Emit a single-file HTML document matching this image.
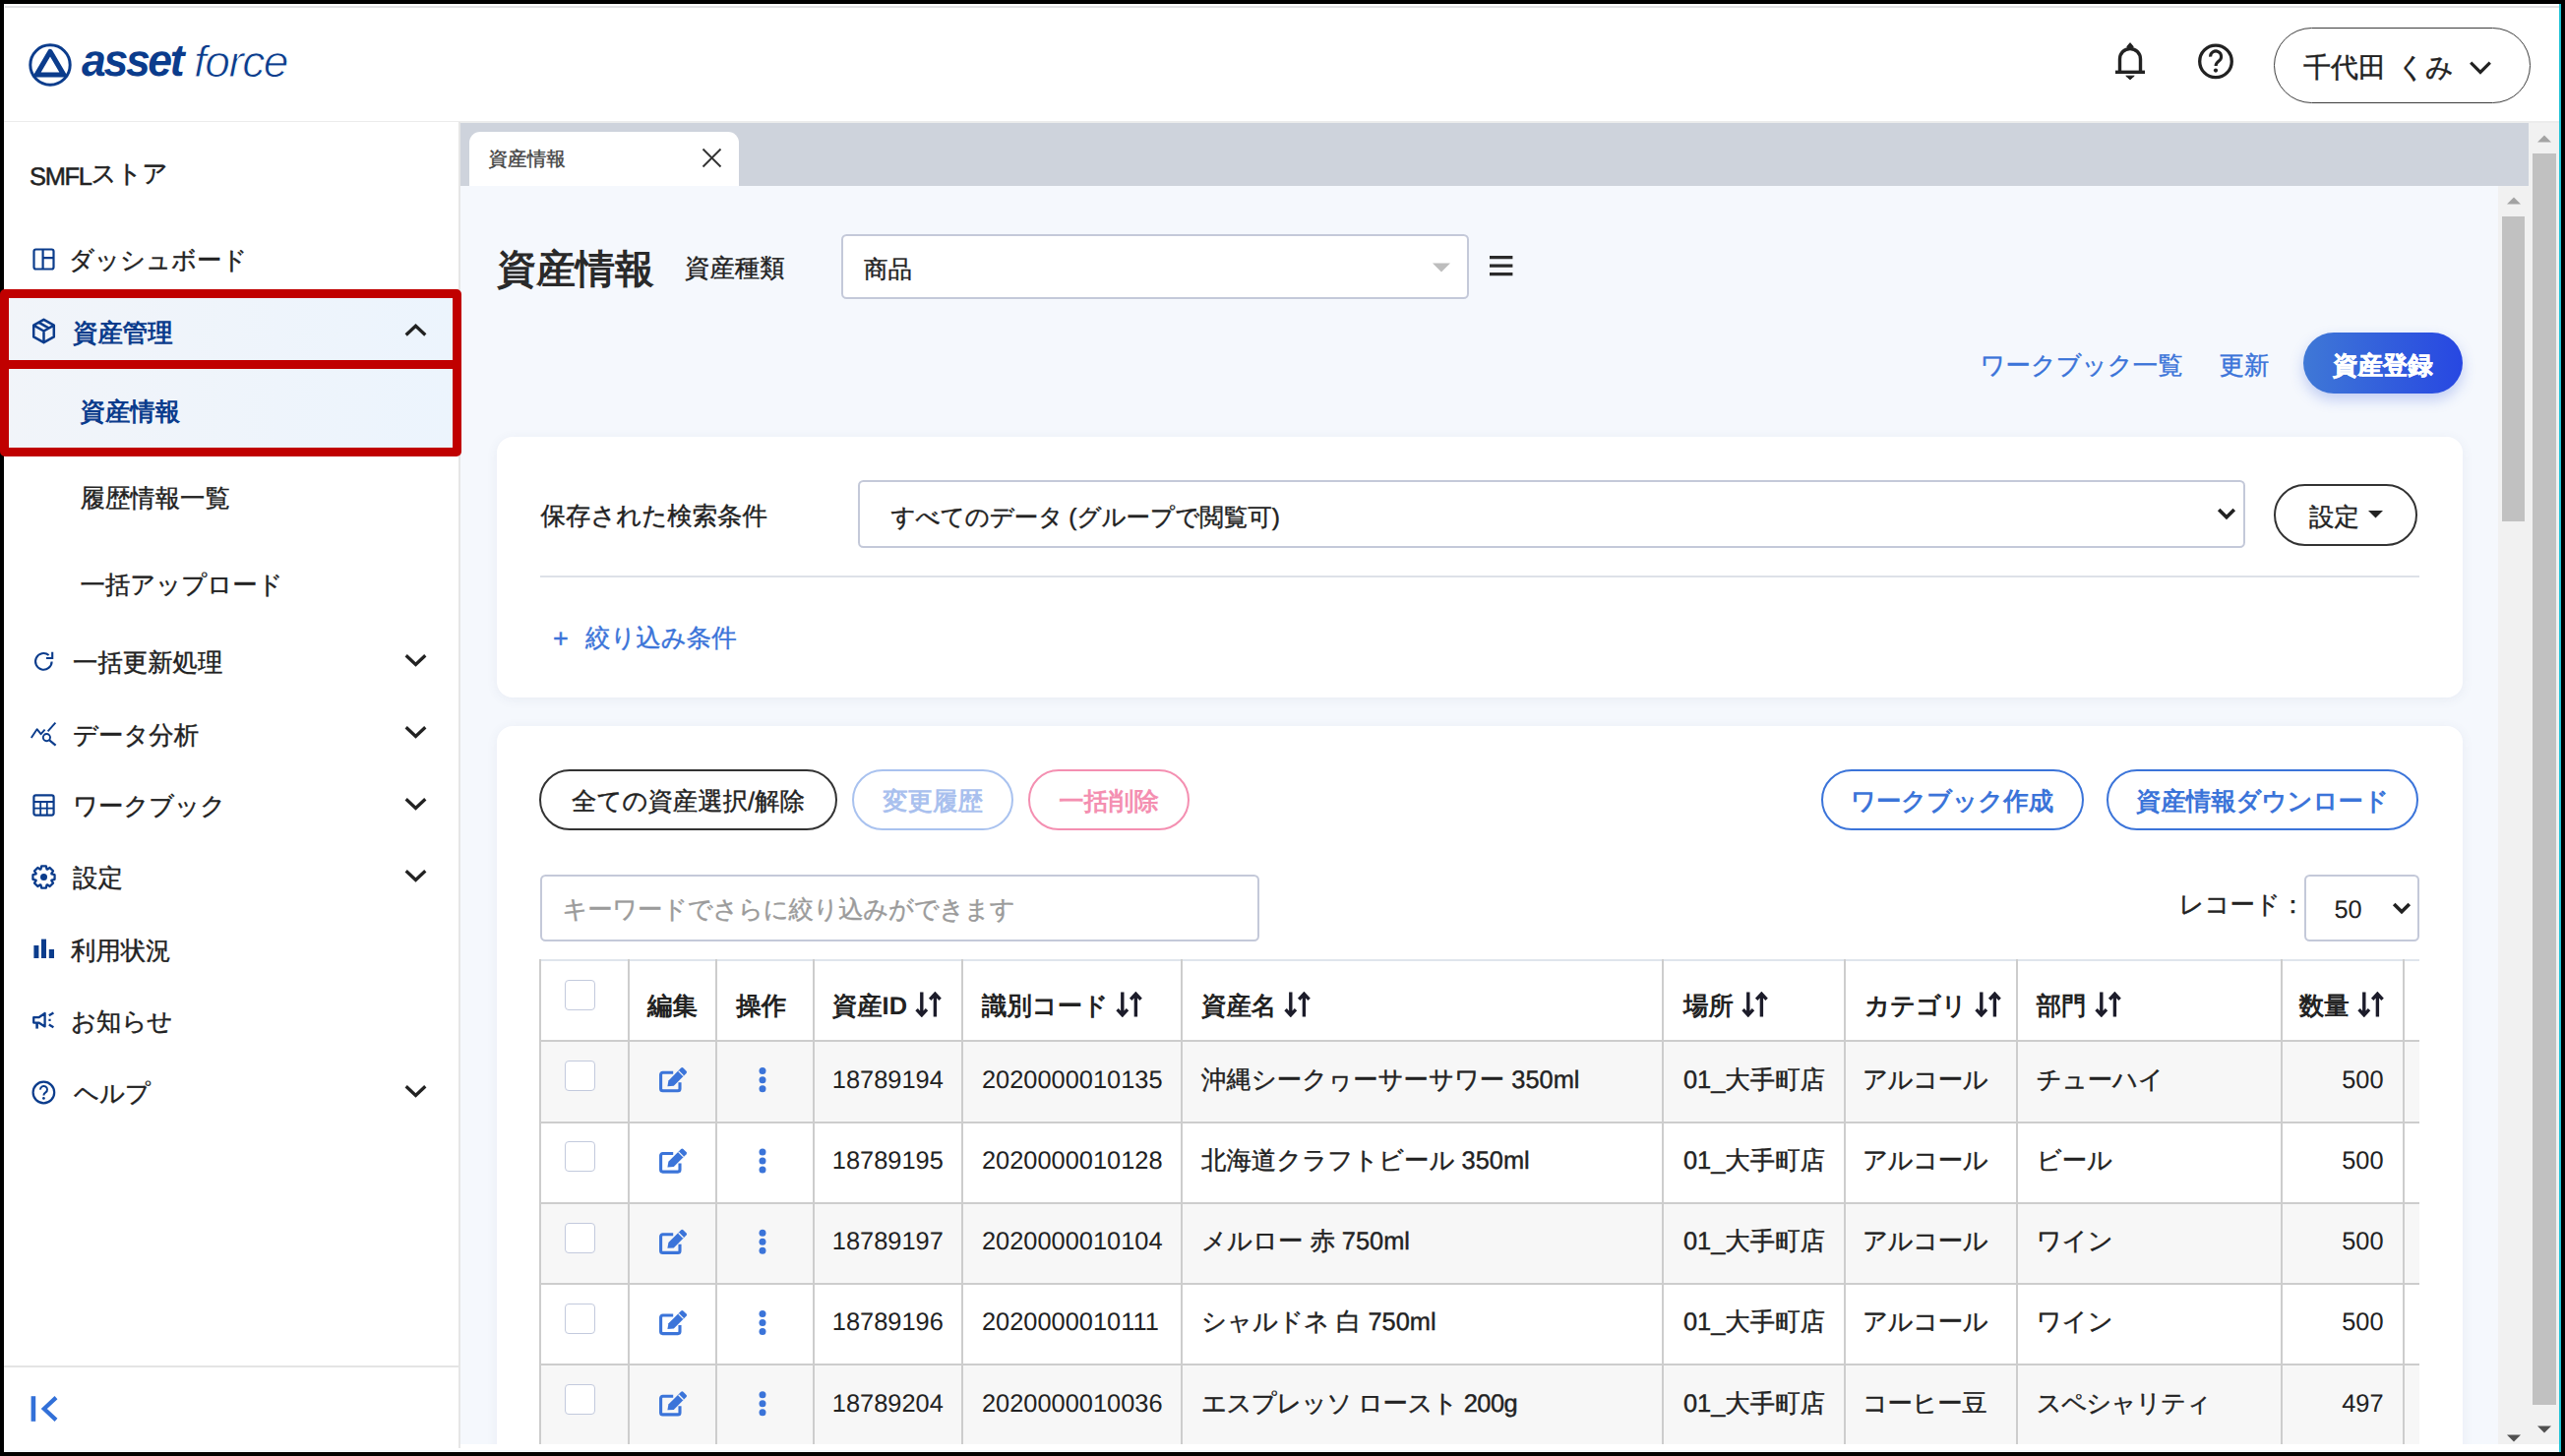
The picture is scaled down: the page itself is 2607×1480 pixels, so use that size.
<!DOCTYPE html>
<html lang="ja"><head><meta charset="utf-8"><title>資産情報 - assetforce</title>
<style>
*{box-sizing:border-box;margin:0;padding:0}
html,body{width:2607px;height:1480px;overflow:hidden;background:#000}
body{font-family:"Liberation Sans",sans-serif;color:#222;font-size:25.4px;position:relative;text-rendering:geometricPrecision}
div,span,svg,a,h1,label{position:absolute;display:block}
.t{white-space:nowrap;height:40px;line-height:40px;-webkit-text-stroke:.4px}
.b{font-weight:bold;-webkit-text-stroke:0}
.k{-webkit-text-stroke:.4px}
.nav{color:#0b3c8c}
.blue{color:#3b74d9}
.pill{border-radius:40px;border:2px solid #333;background:#fff;text-align:center;white-space:nowrap}
.box{border:2px solid #c4c9d9;border-radius:5.5px;background:#fff}
.card{background:#fff;border-radius:16px;box-shadow:0 2px 12px rgba(70,85,120,.075)}
.cb{width:31px;height:31px;border:1.7px solid #c3cadd;border-radius:4px;background:#fff;left:574px}
.th{font-weight:bold;white-space:nowrap;height:40px;line-height:40px;top:1003px}
.td{white-space:nowrap;height:40px;line-height:40px}
.in{position:static;display:inline-block;vertical-align:-3px;margin-left:1px}
</style></head>
<body>
<div id="win" style="left:4px;top:4px;width:2597px;height:1472px;background:#fff"></div>
<div style="left:2601px;top:4px;width:2px;height:1472px;background:#22c3d6"></div>
<div style="left:5px;top:6px;width:2596px;height:2px;background:#e0e1e3"></div>
<header style="position:absolute;left:4px;top:8px;width:2597px;height:115px;background:#fff"></header>
<div style="left:4px;top:122.5px;width:2597px;height:2px;background:#ececec"></div>
<svg style="left:27px;top:42px" width="48" height="48" viewBox="0 0 48 48">
<circle cx="24" cy="24" r="20.2" fill="none" stroke="#0b3c8c" stroke-width="3"/>
<path d="M24 10.5 L37.8 34 L10.2 34 Z" fill="none" stroke="#0b3c8c" stroke-width="5.2" stroke-linejoin="round"/>
</svg>
<div class="t" id="lg1" style="left:82.5px;top:33px;height:56px;line-height:56px;font-size:46px;font-weight:bold;font-style:italic;color:#0b3c8c;letter-spacing:-2.4px;-webkit-text-stroke:0;transform-origin:0 50%;transform:scaleX(.968)">asset</div>
<div class="t" id="lg2" style="left:196.5px;top:35px;height:56px;line-height:56px;font-size:45px;font-style:italic;color:#0b3c8c;letter-spacing:-1.5px;-webkit-text-stroke:.9px #fff;transform-origin:0 50%;transform:scaleX(1.026)">force</div>
<svg style="left:2146px;top:42px" width="38" height="42" viewBox="0 0 38 42">
<path d="M8.5 30.5 V18 a10.5 10.5 0 0 1 21 0 V30.5" fill="none" stroke="#222" stroke-width="3.4"/>
<path d="M4 31.3 H34" stroke="#222" stroke-width="3.4"/>
<path d="M16.2 5.6 L19 2.2 L21.8 5.6 Z" fill="#222" stroke="#222" stroke-width="1.6" stroke-linejoin="round"/>
<path d="M14.8 35.2 H23.2 L19 38.8 Z" fill="#222" stroke="#222" stroke-width="1" stroke-linejoin="round"/>
</svg>
<svg style="left:2232px;top:42px" width="40" height="40" viewBox="0 0 40 40">
<circle cx="20" cy="20.4" r="16.3" fill="none" stroke="#222" stroke-width="3.3"/>
<path d="M14.6 15.6 a5.5 5.5 0 1 1 8.6 4.4 c-2 1.5 -3.1 2.4 -3.1 5" fill="none" stroke="#222" stroke-width="3.1"/>
<circle cx="20" cy="29.6" r="2.1" fill="#222"/>
</svg>
<div class="pill" style="left:2311px;top:27.5px;width:261px;height:77px;border-color:#3d3d3d;border-width:1.8px"></div>
<div class="t" id="user" style="left:2341px;top:49px;font-size:28px;word-spacing:3.5px">千代田 くみ</div>
<svg style="left:2509px;top:61px" width="24" height="16" viewBox="0 0 24 16"><path d="M2.2 2.6 L12 12.4 L21.8 2.6" fill="none" stroke="#222" stroke-width="3.2"/></svg>
<main style="position:absolute;left:468px;top:188.5px;width:2072px;height:1279.5px;background:#f5f8fd;overflow:hidden"></main>
<div style="left:468px;top:124.5px;width:2102px;height:64px;background:#ced3dc"></div>
<div style="left:477px;top:133.5px;width:274px;height:55px;background:#fff;border-radius:11px 11px 0 0"></div>
<div class="t " style="left:496.5px;top:141.7px;font-size:19.6px;color:#444">資産情報</div>
<svg style="left:713px;top:150px" width="21" height="21" viewBox="0 0 21 21"><path d="M1.5 1.5 L19.5 19.5 M19.5 1.5 L1.5 19.5" stroke="#333" stroke-width="1.9" fill="none"/></svg>
<h1 class="t b" style="left:505px;top:254.7px;font-size:40px;height:56px;line-height:56px;top:246px;color:#2a2a2a">資産情報</h1>
<div class="t " style="left:696px;top:253.2px;">資産種類</div>
<div class="box" style="left:855px;top:237.5px;width:638px;height:66px"></div>
<div class="t " style="left:878px;top:255.3px;font-size:24.5px">商品</div>
<svg style="left:1455.5px;top:266.5px" width="18" height="10" viewBox="0 0 18 10"><path d="M0 0.4 H18 L9 9.6 Z" fill="#bdbdbd"/></svg>
<svg style="left:1514px;top:259px" width="24" height="22" viewBox="0 0 24 22"><path d="M0 2.6 H23.4 M0 11.2 H23.4 M0 19.6 H23.4" stroke="#2a2a2a" stroke-width="3.2"/></svg>
<a class="t blue" style="left:2012.5px;top:351.7px;">ワークブック一覧</a>
<a class="t blue" style="left:2255.5px;top:351.7px;">更新</a>
<div style="left:2341px;top:337.5px;width:162px;height:62.5px;border-radius:32px;background:linear-gradient(90deg,#3f78d6,#2747e2);box-shadow:0 6px 14px rgba(50,90,220,.28)"></div>
<div class="t b" style="left:2371px;top:351.7px;color:#fff;-webkit-text-stroke:.6px #fff">資産登録</div>
<section class="card" style="position:absolute;left:505px;top:444px;width:1998px;height:265px"></section>
<label class="t " style="left:549.5px;top:505.2px;">保存された検索条件</label>
<div class="box" style="left:871.5px;top:488px;width:1410px;height:69px"></div>
<div class="t " style="left:905.5px;top:506.7px;font-size:24.5px;word-spacing:-1px">すべてのデータ (グループで閲覧可)</div>
<svg style="left:2253px;top:515px" width="20" height="15" viewBox="0 0 20 15"><path d="M2.2 3 L10 10.8 L17.8 3" fill="none" stroke="#222" stroke-width="3.6"/></svg>
<div class="pill" style="left:2310.5px;top:491.5px;width:146.5px;height:63.5px"></div>
<div class="t " style="left:2347px;top:506.2px;">設定</div>
<svg style="left:2407px;top:519px" width="15" height="8" viewBox="0 0 15 8"><path d="M0 0 H15 L7.5 7.6 Z" fill="#222"/></svg>
<div style="left:548.5px;top:584.5px;width:1910px;height:2px;background:#dde1e8"></div>
<div class="t blue" style="left:562px;top:628.7px;font-size:27px">+</div>
<a class="t blue" style="left:595px;top:628.7px;">絞り込み条件</a>
<section class="card" style="position:absolute;left:505px;top:738px;width:1998px;height:760px"></section>
<div class="pill" style="left:548px;top:782px;width:303px;height:62px;border:2px solid #333"></div><div class="t" style="left:548px;width:303px;text-align:center;top:795.2px;color:#222;">全ての資産選択/解除</div>
<div class="pill" style="left:866px;top:782px;width:164px;height:62px;border:2px solid #a9c2ef"></div><div class="t" style="left:866px;width:164px;text-align:center;top:795.2px;color:#a9c0ee;font-weight:bold;-webkit-text-stroke:0;">変更履歴</div>
<div class="pill" style="left:1045px;top:782px;width:164px;height:62px;border:2px solid #f48fb1"></div><div class="t" style="left:1045px;width:164px;text-align:center;top:795.2px;color:#f48fb1;font-weight:bold;-webkit-text-stroke:0;">一括削除</div>
<div class="pill" style="left:1850.5px;top:782px;width:267px;height:62px;border:2px solid #3b74d9"></div><div class="t" style="left:1850.5px;width:267px;text-align:center;top:795.2px;color:#3b74d9;font-weight:bold;-webkit-text-stroke:0;">ワークブック作成</div>
<div class="pill" style="left:2141px;top:782px;width:317px;height:62px;border:2px solid #3b74d9"></div><div class="t" style="left:2141px;width:317px;text-align:center;top:795.2px;color:#3b74d9;font-weight:bold;-webkit-text-stroke:0;">資産情報ダウンロード</div>
<div class="box" style="left:548.5px;top:888.5px;width:731px;height:68.5px"></div>
<div class="t " style="left:571.5px;top:904.7px;color:#9b9b9b;letter-spacing:-.3px">キーワードでさらに絞り込みができます</div>
<div class="t " style="left:2214.5px;top:900.2px;">レコード：</div>
<div class="box" style="left:2342px;top:888.5px;width:117px;height:68px"></div>
<div class="t " style="left:2372.5px;top:905.2px;-webkit-text-stroke:0">50</div>
<svg style="left:2430.5px;top:915.5px" width="20" height="15" viewBox="0 0 20 15"><path d="M2.2 3 L10 10.8 L17.8 3" fill="none" stroke="#222" stroke-width="3.6"/></svg>
<div id="tbl" style="left:548px;top:975px;width:1911px;height:493px;overflow:hidden">
<div style="left:0;top:83.3px;width:1911px;height:83px;background:#f7f7f7"></div>
<div style="left:0;top:165.6px;width:1911px;height:83px;background:#fff"></div>
<div style="left:0;top:247.9px;width:1911px;height:83px;background:#f7f7f7"></div>
<div style="left:0;top:330.1px;width:1911px;height:83px;background:#fff"></div>
<div style="left:0;top:412.4px;width:1911px;height:83px;background:#f7f7f7"></div>
<div style="left:0;top:0px;width:1911px;height:2px;background:#dfe5ec"></div>
<div style="left:0;top:82.3px;width:1911px;height:2px;background:#cdcdcd"></div>
<div style="left:0;top:164.6px;width:1911px;height:2px;background:#cdcdcd"></div>
<div style="left:0;top:246.9px;width:1911px;height:2px;background:#cdcdcd"></div>
<div style="left:0;top:329.1px;width:1911px;height:2px;background:#cdcdcd"></div>
<div style="left:0;top:411.4px;width:1911px;height:2px;background:#cdcdcd"></div>
<div style="left:0.0px;top:0;width:2px;height:493px;background:#cdcdcd"></div>
<div style="left:89.5px;top:0;width:2px;height:493px;background:#cdcdcd"></div>
<div style="left:179.0px;top:0;width:2px;height:493px;background:#cdcdcd"></div>
<div style="left:277.7px;top:0;width:2px;height:493px;background:#cdcdcd"></div>
<div style="left:429.4px;top:0;width:2px;height:493px;background:#cdcdcd"></div>
<div style="left:652.0px;top:0;width:2px;height:493px;background:#cdcdcd"></div>
<div style="left:1141.4px;top:0;width:2px;height:493px;background:#cdcdcd"></div>
<div style="left:1326.0px;top:0;width:2px;height:493px;background:#cdcdcd"></div>
<div style="left:1501.0px;top:0;width:2px;height:493px;background:#cdcdcd"></div>
<div style="left:1770.0px;top:0;width:2px;height:493px;background:#cdcdcd"></div>
<div style="left:1894.0px;top:0;width:2px;height:493px;background:#cdcdcd"></div>
</div>
<div class="cb" style="top:996px"></div>
<div class="th" style="left:658px">編集</div>
<div class="th" style="left:748.3px">操作</div>
<div class="th" style="left:845.8px">資産ID <svg class="in" width="27" height="26" viewBox="0 0 27 26"><path d="M6.8 0.6 V23.4 M1.6 18.2 L6.8 23.8 L12 18.2" stroke="#1c1c2a" stroke-width="3.4" fill="none"/><path d="M20.4 25.4 V2.6 M15.2 7.8 L20.4 2.2 L25.6 7.8" stroke="#1c1c2a" stroke-width="3.4" fill="none"/></svg></div>
<div class="th" style="left:998px">識別コード <svg class="in" width="27" height="26" viewBox="0 0 27 26"><path d="M6.8 0.6 V23.4 M1.6 18.2 L6.8 23.8 L12 18.2" stroke="#1c1c2a" stroke-width="3.4" fill="none"/><path d="M20.4 25.4 V2.6 M15.2 7.8 L20.4 2.2 L25.6 7.8" stroke="#1c1c2a" stroke-width="3.4" fill="none"/></svg></div>
<div class="th" style="left:1221px">資産名 <svg class="in" width="27" height="26" viewBox="0 0 27 26"><path d="M6.8 0.6 V23.4 M1.6 18.2 L6.8 23.8 L12 18.2" stroke="#1c1c2a" stroke-width="3.4" fill="none"/><path d="M20.4 25.4 V2.6 M15.2 7.8 L20.4 2.2 L25.6 7.8" stroke="#1c1c2a" stroke-width="3.4" fill="none"/></svg></div>
<div class="th" style="left:1711px">場所 <svg class="in" width="27" height="26" viewBox="0 0 27 26"><path d="M6.8 0.6 V23.4 M1.6 18.2 L6.8 23.8 L12 18.2" stroke="#1c1c2a" stroke-width="3.4" fill="none"/><path d="M20.4 25.4 V2.6 M15.2 7.8 L20.4 2.2 L25.6 7.8" stroke="#1c1c2a" stroke-width="3.4" fill="none"/></svg></div>
<div class="th" style="left:1895px">カテゴリ <svg class="in" width="27" height="26" viewBox="0 0 27 26"><path d="M6.8 0.6 V23.4 M1.6 18.2 L6.8 23.8 L12 18.2" stroke="#1c1c2a" stroke-width="3.4" fill="none"/><path d="M20.4 25.4 V2.6 M15.2 7.8 L20.4 2.2 L25.6 7.8" stroke="#1c1c2a" stroke-width="3.4" fill="none"/></svg></div>
<div class="th" style="left:2069.7px">部門 <svg class="in" width="27" height="26" viewBox="0 0 27 26"><path d="M6.8 0.6 V23.4 M1.6 18.2 L6.8 23.8 L12 18.2" stroke="#1c1c2a" stroke-width="3.4" fill="none"/><path d="M20.4 25.4 V2.6 M15.2 7.8 L20.4 2.2 L25.6 7.8" stroke="#1c1c2a" stroke-width="3.4" fill="none"/></svg></div>
<div class="th" style="left:2200px;width:222.6px;text-align:right">数量 <svg class="in" width="27" height="26" viewBox="0 0 27 26"><path d="M6.8 0.6 V23.4 M1.6 18.2 L6.8 23.8 L12 18.2" stroke="#1c1c2a" stroke-width="3.4" fill="none"/><path d="M20.4 25.4 V2.6 M15.2 7.8 L20.4 2.2 L25.6 7.8" stroke="#1c1c2a" stroke-width="3.4" fill="none"/></svg></div>
<div class="cb" style="top:1078.0px"></div>
<svg style="left:669px;top:1084px" width="31" height="28" viewBox="0 -0.00 31 28"><path d="M22 16.2 V22.8 a2 2 0 0 1 -2 2 H4.6 a2 2 0 0 1 -2 -2 V8.2 a2 2 0 0 1 2 -2 H15.2" fill="none" stroke="#3b74d9" stroke-width="3.1"/><path d="M9.4 20.2 L10.4 14.4 L23.2 1.6 a1.6 1.6 0 0 1 2.2 0 L28.6 4.8 a1.6 1.6 0 0 1 0 2.2 L15.8 19.8 Z" fill="#3b74d9"/><path d="M20.6 4.6 L25.6 9.6" stroke="#f7f7f7" stroke-width="1.3"/></svg>
<svg style="left:770px;top:1083px" width="10" height="29" viewBox="0 -0.60 10 29"><circle cx="5" cy="5" r="3.5" fill="#3b74d9"/><circle cx="5" cy="14.05" r="3.5" fill="#3b74d9"/><circle cx="5" cy="23.1" r="3.5" fill="#3b74d9"/></svg>
<div class="td" style="left:845.8px;top:1077.5px;">18789194</div>
<div class="td" style="left:998px;top:1077.5px;">2020000010135</div>
<div class="td k" style="left:1221px;top:1077.5px;">沖縄シークヮーサーサワー 350ml</div>
<div class="td k" style="left:1711px;top:1077.5px;">01_大手町店</div>
<div class="td k" style="left:1893px;top:1077.5px;letter-spacing:-.4px;">アルコール</div>
<div class="td k" style="left:2069.7px;top:1077.5px;">チューハイ</div>
<div class="td" style="left:2300px;width:122.6px;text-align:right;top:1077.5px">500</div>
<div class="cb" style="top:1160.3px"></div>
<svg style="left:669px;top:1166px" width="31" height="28" viewBox="0 -0.30 31 28"><path d="M22 16.2 V22.8 a2 2 0 0 1 -2 2 H4.6 a2 2 0 0 1 -2 -2 V8.2 a2 2 0 0 1 2 -2 H15.2" fill="none" stroke="#3b74d9" stroke-width="3.1"/><path d="M9.4 20.2 L10.4 14.4 L23.2 1.6 a1.6 1.6 0 0 1 2.2 0 L28.6 4.8 a1.6 1.6 0 0 1 0 2.2 L15.8 19.8 Z" fill="#3b74d9"/><path d="M20.6 4.6 L25.6 9.6" stroke="#f7f7f7" stroke-width="1.3"/></svg>
<svg style="left:770px;top:1165px" width="10" height="29" viewBox="0 -0.90 10 29"><circle cx="5" cy="5" r="3.5" fill="#3b74d9"/><circle cx="5" cy="14.05" r="3.5" fill="#3b74d9"/><circle cx="5" cy="23.1" r="3.5" fill="#3b74d9"/></svg>
<div class="td" style="left:845.8px;top:1159.8px;">18789195</div>
<div class="td" style="left:998px;top:1159.8px;">2020000010128</div>
<div class="td k" style="left:1221px;top:1159.8px;">北海道クラフトビール 350ml</div>
<div class="td k" style="left:1711px;top:1159.8px;">01_大手町店</div>
<div class="td k" style="left:1893px;top:1159.8px;letter-spacing:-.4px;">アルコール</div>
<div class="td k" style="left:2069.7px;top:1159.8px;">ビール</div>
<div class="td" style="left:2300px;width:122.6px;text-align:right;top:1159.8px">500</div>
<div class="cb" style="top:1242.6px"></div>
<svg style="left:669px;top:1248px" width="31" height="28" viewBox="0 -0.60 31 28"><path d="M22 16.2 V22.8 a2 2 0 0 1 -2 2 H4.6 a2 2 0 0 1 -2 -2 V8.2 a2 2 0 0 1 2 -2 H15.2" fill="none" stroke="#3b74d9" stroke-width="3.1"/><path d="M9.4 20.2 L10.4 14.4 L23.2 1.6 a1.6 1.6 0 0 1 2.2 0 L28.6 4.8 a1.6 1.6 0 0 1 0 2.2 L15.8 19.8 Z" fill="#3b74d9"/><path d="M20.6 4.6 L25.6 9.6" stroke="#f7f7f7" stroke-width="1.3"/></svg>
<svg style="left:770px;top:1248px" width="10" height="29" viewBox="0 -0.20 10 29"><circle cx="5" cy="5" r="3.5" fill="#3b74d9"/><circle cx="5" cy="14.05" r="3.5" fill="#3b74d9"/><circle cx="5" cy="23.1" r="3.5" fill="#3b74d9"/></svg>
<div class="td" style="left:845.8px;top:1242.1px;">18789197</div>
<div class="td" style="left:998px;top:1242.1px;">2020000010104</div>
<div class="td k" style="left:1221px;top:1242.1px;">メルロー 赤 750ml</div>
<div class="td k" style="left:1711px;top:1242.1px;">01_大手町店</div>
<div class="td k" style="left:1893px;top:1242.1px;letter-spacing:-.4px;">アルコール</div>
<div class="td k" style="left:2069.7px;top:1242.1px;">ワイン</div>
<div class="td" style="left:2300px;width:122.6px;text-align:right;top:1242.1px">500</div>
<div class="cb" style="top:1324.8px"></div>
<svg style="left:669px;top:1330px" width="31" height="28" viewBox="0 -0.80 31 28"><path d="M22 16.2 V22.8 a2 2 0 0 1 -2 2 H4.6 a2 2 0 0 1 -2 -2 V8.2 a2 2 0 0 1 2 -2 H15.2" fill="none" stroke="#3b74d9" stroke-width="3.1"/><path d="M9.4 20.2 L10.4 14.4 L23.2 1.6 a1.6 1.6 0 0 1 2.2 0 L28.6 4.8 a1.6 1.6 0 0 1 0 2.2 L15.8 19.8 Z" fill="#3b74d9"/><path d="M20.6 4.6 L25.6 9.6" stroke="#f7f7f7" stroke-width="1.3"/></svg>
<svg style="left:770px;top:1330px" width="10" height="29" viewBox="0 -0.40 10 29"><circle cx="5" cy="5" r="3.5" fill="#3b74d9"/><circle cx="5" cy="14.05" r="3.5" fill="#3b74d9"/><circle cx="5" cy="23.1" r="3.5" fill="#3b74d9"/></svg>
<div class="td" style="left:845.8px;top:1324.3px;">18789196</div>
<div class="td" style="left:998px;top:1324.3px;">2020000010111</div>
<div class="td k" style="left:1221px;top:1324.3px;">シャルドネ 白 750ml</div>
<div class="td k" style="left:1711px;top:1324.3px;">01_大手町店</div>
<div class="td k" style="left:1893px;top:1324.3px;letter-spacing:-.4px;">アルコール</div>
<div class="td k" style="left:2069.7px;top:1324.3px;">ワイン</div>
<div class="td" style="left:2300px;width:122.6px;text-align:right;top:1324.3px">500</div>
<div class="cb" style="top:1407.1px"></div>
<svg style="left:669px;top:1413px" width="31" height="28" viewBox="0 -0.10 31 28"><path d="M22 16.2 V22.8 a2 2 0 0 1 -2 2 H4.6 a2 2 0 0 1 -2 -2 V8.2 a2 2 0 0 1 2 -2 H15.2" fill="none" stroke="#3b74d9" stroke-width="3.1"/><path d="M9.4 20.2 L10.4 14.4 L23.2 1.6 a1.6 1.6 0 0 1 2.2 0 L28.6 4.8 a1.6 1.6 0 0 1 0 2.2 L15.8 19.8 Z" fill="#3b74d9"/><path d="M20.6 4.6 L25.6 9.6" stroke="#f7f7f7" stroke-width="1.3"/></svg>
<svg style="left:770px;top:1412px" width="10" height="29" viewBox="0 -0.70 10 29"><circle cx="5" cy="5" r="3.5" fill="#3b74d9"/><circle cx="5" cy="14.05" r="3.5" fill="#3b74d9"/><circle cx="5" cy="23.1" r="3.5" fill="#3b74d9"/></svg>
<div class="td" style="left:845.8px;top:1406.6px;">18789204</div>
<div class="td" style="left:998px;top:1406.6px;">2020000010036</div>
<div class="td k" style="left:1221px;top:1406.6px;letter-spacing:-.55px;">エスプレッソ ロースト 200g</div>
<div class="td k" style="left:1711px;top:1406.6px;">01_大手町店</div>
<div class="td k" style="left:1893px;top:1406.6px;letter-spacing:-.4px;">コーヒー豆</div>
<div class="td k" style="left:2069.7px;top:1406.6px;letter-spacing:-.7px;">スペシャリティ</div>
<div class="td" style="left:2300px;width:122.6px;text-align:right;top:1406.6px">497</div>
<div style="left:468px;top:1468px;width:2133px;height:8px;background:#fff"></div>
<div style="left:4px;top:1473.5px;width:2597px;height:2.5px;background:#f4f7fc"></div>
<div style="left:2570px;top:124.5px;width:31px;height:1343.5px;background:#f1f1f1"></div>
<div style="left:2574px;top:156px;width:23.5px;height:1272px;background:#c1c1c1"></div>
<svg style="left:2578.6px;top:137px" width="14" height="8" viewBox="0 0 14 8"><path d="M0 7.6 L7 0.4 L14 7.6 Z" fill="#a3a3a3"/></svg>
<svg style="left:2578.6px;top:1448.5px" width="14" height="8" viewBox="0 0 14 8"><path d="M0 0.4 L7 7.6 L14 0.4 Z" fill="#505050"/></svg>
<div style="left:2539.3px;top:188.5px;width:31px;height:1279.5px;background:#f1f1f1"></div>
<div style="left:2543px;top:220px;width:23px;height:310px;background:#c1c1c1"></div>
<svg style="left:2547.5px;top:200.3px" width="14" height="8" viewBox="0 0 14 8"><path d="M0 7.6 L7 0.4 L14 7.6 Z" fill="#a3a3a3"/></svg>
<svg style="left:2547.5px;top:1457.5px" width="14" height="8" viewBox="0 0 14 8"><path d="M0 0.4 L7 7.6 L14 0.4 Z" fill="#505050"/></svg>
<nav style="position:absolute;left:4px;top:124px;width:462px;height:1348px;background:#fff"></nav>
<div style="left:466px;top:124px;width:2px;height:1348px;background:#e6e6e6"></div>
<div style="left:4px;top:298px;width:462px;height:162px;background:linear-gradient(90deg,#f1f4f9,#ecf4fd)"></div>
<div style="left:0;top:294px;width:469px;height:81px;border:9px solid #c00000;border-radius:5px"></div>
<div style="left:0;top:366px;width:469px;height:98px;border:9px solid #c00000;border-radius:5px"></div>
<div class="t " style="left:30px;top:157.1px;-webkit-text-stroke:.5px #222"><span class="in" style="letter-spacing:-1.3px;margin:0">SMFL</span>ストア</div>
<svg style="left:32px;top:251px" width="25" height="25" viewBox="0 0 25 25"><rect x="2.5" y="2.5" width="20" height="20" rx="2" fill="none" stroke="#0b3c8c" stroke-width="2.2"/><path d="M11.6 2.5 V22.5 M11.6 11.2 H22.5" stroke="#0b3c8c" stroke-width="2.2" fill="none"/></svg>
<div class="t " style="left:70px;top:245.4px;">ダッシュボード</div>
<svg style="left:31px;top:322px" width="27" height="29" viewBox="0 0 27 29"><path d="M13.5 2.8 L23.8 8.6 V20.4 L13.5 26.2 L3.2 20.4 V8.6 Z M3.2 8.6 L13.5 14.5 L23.8 8.6 M13.5 14.5 V26.2 M8.3 5.7 L18.7 11.6" fill="none" stroke="#0b3c8c" stroke-width="2.5" stroke-linejoin="round"/></svg>
<div class="t b nav" style="left:74px;top:318.7px;">資産管理</div>
<svg style="left:411.0px;top:328px" width="23" height="16" viewBox="0 0 23 16"><path d="M1.7 12.5 L11.5 3.3 L21.3 12.5" fill="none" stroke="#222" stroke-width="3.3"/></svg>
<div class="t b nav" style="left:81.5px;top:399.2px;">資産情報</div>
<div class="t " style="left:81.5px;top:486.7px;">履歴情報一覧</div>
<div class="t " style="left:81.5px;top:574.7px;">一括アップロード</div>
<svg style="left:32px;top:660px" width="25" height="25" viewBox="0 0 25 25"><path d="M20.6 12.4 a8.3 8.3 0 1 1 -3 -6.4" fill="none" stroke="#0b3c8c" stroke-width="2.1"/><path d="M21.2 2.8 V9 H15" fill="none" stroke="#0b3c8c" stroke-width="2.1"/></svg>
<div class="t " style="left:74px;top:653.7px;">一括更新処理</div>
<svg style="left:411.0px;top:663px" width="23" height="16" viewBox="0 0 23 16"><path d="M1.7 3.3 L11.5 12.5 L21.3 3.3" fill="none" stroke="#222" stroke-width="3.3"/></svg>
<svg style="left:30px;top:732px" width="30" height="28" viewBox="0 0 30 28"><path d="M1.8 18 L7.6 9.2 L11.6 14.2 L15.6 9.6" fill="none" stroke="#0b3c8c" stroke-width="1.9" stroke-linejoin="round"/><path d="M18.6 11.4 L26.4 2.6" stroke="#0b3c8c" stroke-width="1.9"/><circle cx="17.4" cy="17.6" r="3.6" fill="none" stroke="#0b3c8c" stroke-width="1.9"/><path d="M20.2 20.4 L26.6 25.6" stroke="#0b3c8c" stroke-width="2.2"/></svg>
<div class="t " style="left:74px;top:727.7px;">データ分析</div>
<svg style="left:411.0px;top:736px" width="23" height="16" viewBox="0 0 23 16"><path d="M1.7 3.3 L11.5 12.5 L21.3 3.3" fill="none" stroke="#222" stroke-width="3.3"/></svg>
<svg style="left:32px;top:806px" width="25" height="25" viewBox="0 0 25 25"><rect x="2.4" y="2.4" width="20.2" height="20.2" rx="2" fill="none" stroke="#0b3c8c" stroke-width="2.2"/><path d="M2.4 9 H22.6 M2.4 15.6 H22.6 M9.2 9 V22.6 M15.8 9 V22.6" stroke="#0b3c8c" stroke-width="1.8" fill="none"/></svg>
<div class="t " style="left:74px;top:799.7px;">ワークブック</div>
<svg style="left:411.0px;top:809px" width="23" height="16" viewBox="0 0 23 16"><path d="M1.7 3.3 L11.5 12.5 L21.3 3.3" fill="none" stroke="#222" stroke-width="3.3"/></svg>
<svg style="left:30.8px;top:877.5px" width="27" height="27" viewBox="0 0 27 27"><path d="M11.14 2.45 L15.86 2.45 L16.53 5.45 L17.05 5.67 L19.65 4.02 L22.98 7.35 L21.33 9.95 L21.55 10.47 L24.55 11.14 L24.55 15.86 L21.55 16.53 L21.33 17.05 L22.98 19.65 L19.65 22.98 L17.05 21.33 L16.53 21.55 L15.86 24.55 L11.14 24.55 L10.47 21.55 L9.95 21.33 L7.35 22.98 L4.02 19.65 L5.67 17.05 L5.45 16.53 L2.45 15.86 L2.45 11.14 L5.45 10.47 L5.67 9.95 L4.02 7.35 L7.35 4.02 L9.95 5.67 L10.47 5.45 Z" fill="none" stroke="#0b3c8c" stroke-width="2.3" stroke-linejoin="round"/><circle cx="13.5" cy="13.5" r="3.5" fill="#0b3c8c"/></svg>
<div class="t " style="left:74px;top:872.7px;">設定</div>
<svg style="left:411.0px;top:882px" width="23" height="16" viewBox="0 0 23 16"><path d="M1.7 3.3 L11.5 12.5 L21.3 3.3" fill="none" stroke="#222" stroke-width="3.3"/></svg>
<svg style="left:34px;top:954px" width="22" height="20" viewBox="0 0 22 20"><rect x="0.4" y="7" width="5" height="13" fill="#0b3c8c"/><rect x="8" y="0.6" width="5" height="19.4" fill="#0b3c8c"/><rect x="15.8" y="11" width="5.2" height="9" fill="#0b3c8c"/></svg>
<div class="t " style="left:72px;top:946.7px;">利用状況</div>
<svg style="left:32px;top:1027px" width="26" height="22" viewBox="0 0 26 22"><path d="M2.2 7.2 H7.4 L13.6 3 V16.4 L7.4 12.6 H2.2 Z" fill="none" stroke="#0b3c8c" stroke-width="2.3" stroke-linejoin="round"/><path d="M5.6 12.8 V18.6" stroke="#0b3c8c" stroke-width="2.6"/><path d="M17.4 9.8 H19.6 M17.8 5.2 L22.4 2.4 M17.8 14.4 L22.4 17.2" stroke="#0b3c8c" stroke-width="2.3"/></svg>
<div class="t " style="left:72px;top:1018.7px;">お知らせ</div>
<svg style="left:31px;top:1097px" width="27" height="27" viewBox="0 0 27 27"><circle cx="13.4" cy="13.5" r="10.8" fill="none" stroke="#0b3c8c" stroke-width="2.2"/><path d="M10 10.6 a3.5 3.5 0 1 1 5.4 2.8 c-1.3 .9 -2 1.5 -2 3" fill="none" stroke="#0b3c8c" stroke-width="2"/><circle cx="13.4" cy="19.4" r="1.4" fill="#0b3c8c"/></svg>
<div class="t " style="left:75px;top:1092.3px;">ヘルプ</div>
<svg style="left:411.0px;top:1101px" width="23" height="16" viewBox="0 0 23 16"><path d="M1.7 3.3 L11.5 12.5 L21.3 3.3" fill="none" stroke="#222" stroke-width="3.3"/></svg>
<div style="left:4px;top:1388px;width:462px;height:2px;background:#e4e4e4"></div>
<svg style="left:30px;top:1418px" width="30" height="28" viewBox="0 0 30 28"><path d="M3.9 1.2 V26.8" stroke="#3270d8" stroke-width="4.6"/><path d="M27 2.6 L14.8 14 L27 25.4" fill="none" stroke="#3270d8" stroke-width="4.2"/></svg>
<div style="left:0;top:1476px;width:2607px;height:4px;background:#000"></div>
</body></html>
